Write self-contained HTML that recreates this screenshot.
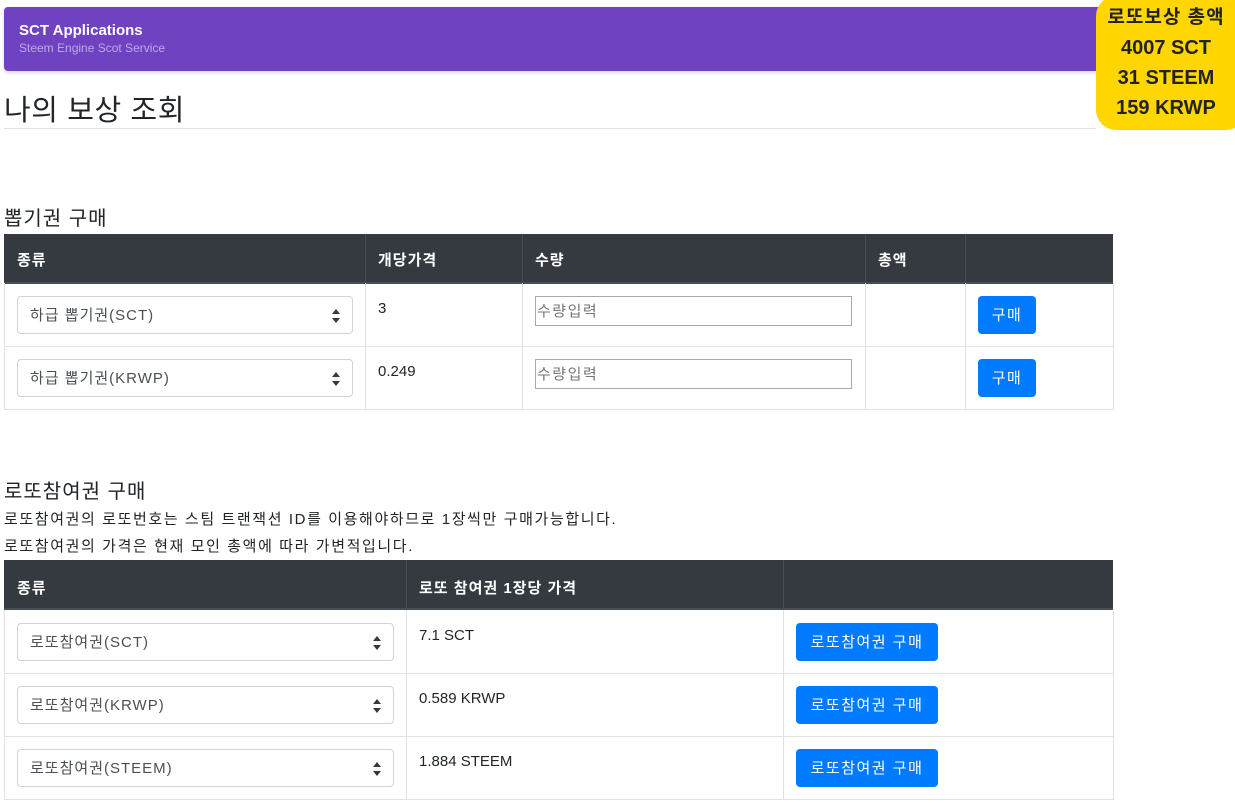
<!DOCTYPE html>
<html><head><meta charset="utf-8"><style>
*{box-sizing:border-box;margin:0;padding:0}
body{width:1235px;height:803px;overflow:hidden;background:#fff;font-family:"Liberation Sans","Noto Sans CJK KR",sans-serif;color:#212529;position:relative}
.a{position:absolute}
.nav{left:4px;top:7px;width:1240px;height:64px;background:#6f42c1;border-radius:4px;box-shadow:0 2px 4px rgba(0,0,0,.15)}
.yb{left:1096px;top:-4px;width:150px;height:134px;background:#ffd600;border-radius:20px;text-align:center;font-weight:bold;font-size:20px;color:#222;line-height:30px;padding-top:6px;padding-right:10px}
.th{background:#343a40;color:#fff;font-weight:bold;font-size:15px;height:50px;border-bottom:2px solid #454d55}
.cellb{border:1px solid #dee2e6}
.sel{border:1px solid #ced4da;border-radius:4px;height:38px;font-size:15px;padding:0 12px;line-height:38px;color:#495057;letter-spacing:1px}
.sel:after{content:"";position:absolute;right:12px;top:12px;border:4px solid transparent;border-bottom:5px solid #343a40;border-top:0}
.sel:before{content:"";position:absolute;right:12px;top:21px;border:4px solid transparent;border-top:5px solid #343a40;border-bottom:0}
.btn{background:#007bff;color:#fff;border-radius:4px;height:38px;font-size:15px;line-height:40px;text-align:center;letter-spacing:1.5px}
.inp{border:1px solid #a9a9a9;height:30px;font-size:15px;line-height:30px;color:#757575;padding-left:1px;letter-spacing:1.5px}
.t{font-size:15px}
.k{letter-spacing:1.6px}
.hd{color:#fff;font-weight:bold;font-size:15px;letter-spacing:1px}
</style></head><body>
<div class="a nav"></div>
<div class="a" style="left:19px;top:22px;color:#fff;font-weight:bold;font-size:15px">SCT Applications</div>
<div class="a" style="left:19px;top:41px;color:#c0a8e8;font-size:12px">Steem Engine Scot Service</div>
<div class="a yb"><span style="font-size:19px;letter-spacing:1px">로또보상 총액</span><br>4007 SCT<br>31 STEEM<br>159 KRWP</div>
<div class="a" style="left:4px;top:87px;font-size:29px;color:#212529;letter-spacing:0.6px">나의 보상 조회</div>
<div class="a" style="left:4px;top:128px;width:1092px;height:1px;background:#dee2e6"></div>

<div class="a" style="left:4px;top:202px;font-size:20px;letter-spacing:1px">뽑기권 구매</div>
<div class="a th" style="left:4px;top:234px;width:1109px"></div>
<div class="a hd" style="left:17px;top:249px">종류</div>
<div class="a hd" style="left:378px;top:249px">개당가격</div>
<div class="a hd" style="left:535px;top:249px">수량</div>
<div class="a hd" style="left:878px;top:249px">총액</div>
<div class="a" style="left:365px;top:234px;width:1px;height:49px;background:#454d55"></div>
<div class="a" style="left:522px;top:234px;width:1px;height:49px;background:#454d55"></div>
<div class="a" style="left:865px;top:234px;width:1px;height:49px;background:#454d55"></div>
<div class="a" style="left:965px;top:234px;width:1px;height:49px;background:#454d55"></div>
<div class="a cellb" style="left:4px;top:283px;width:1110px;height:127px;border-top:0"></div>
<div class="a" style="left:4px;top:346px;width:1110px;height:1px;background:#dee2e6"></div>
<div class="a" style="left:365px;top:283px;width:1px;height:127px;background:#dee2e6"></div>
<div class="a" style="left:522px;top:283px;width:1px;height:127px;background:#dee2e6"></div>
<div class="a" style="left:865px;top:283px;width:1px;height:127px;background:#dee2e6"></div>
<div class="a" style="left:965px;top:283px;width:1px;height:127px;background:#dee2e6"></div>
<div class="a sel" style="left:17px;top:296px;width:336px">하급 뽑기권(SCT)</div>
<div class="a sel" style="left:17px;top:359px;width:336px">하급 뽑기권(KRWP)</div>
<div class="a t" style="left:378px;top:300px">3</div>
<div class="a t" style="left:378px;top:363px">0.249</div>
<div class="a inp" style="left:535px;top:296px;width:317px">수량입력</div>
<div class="a inp" style="left:535px;top:359px;width:317px">수량입력</div>
<div class="a btn" style="left:978px;top:296px;width:58px">구매</div>
<div class="a btn" style="left:978px;top:359px;width:58px">구매</div>

<div class="a" style="left:4px;top:475px;font-size:20px;letter-spacing:1px">로또참여권 구매</div>
<div class="a t k" style="left:4px;top:508px">로또참여권의 로또번호는 스팀 트랜잭션 ID를 이용해야하므로 1장씩만 구매가능합니다.</div>
<div class="a t k" style="left:4px;top:535px">로또참여권의 가격은 현재 모인 총액에 따라 가변적입니다.</div>
<div class="a th" style="left:4px;top:560px;width:1109px"></div>
<div class="a hd" style="left:17px;top:577px">종류</div>
<div class="a hd" style="left:419px;top:577px">로또 참여권 1장당 가격</div>
<div class="a" style="left:406px;top:560px;width:1px;height:50px;background:#454d55"></div>
<div class="a" style="left:783px;top:560px;width:1px;height:50px;background:#454d55"></div>
<div class="a cellb" style="left:4px;top:610px;width:1110px;height:190px;border-top:0"></div>
<div class="a" style="left:4px;top:673px;width:1110px;height:1px;background:#dee2e6"></div>
<div class="a" style="left:4px;top:736px;width:1110px;height:1px;background:#dee2e6"></div>
<div class="a" style="left:406px;top:610px;width:1px;height:190px;background:#dee2e6"></div>
<div class="a" style="left:783px;top:610px;width:1px;height:190px;background:#dee2e6"></div>
<div class="a sel" style="left:17px;top:623px;width:377px">로또참여권(SCT)</div>
<div class="a sel" style="left:17px;top:686px;width:377px">로또참여권(KRWP)</div>
<div class="a sel" style="left:17px;top:749px;width:377px">로또참여권(STEEM)</div>
<div class="a t" style="left:419px;top:627px">7.1 SCT</div>
<div class="a t" style="left:419px;top:690px">0.589 KRWP</div>
<div class="a t" style="left:419px;top:753px">1.884 STEEM</div>
<div class="a btn" style="left:796px;top:623px;width:142px">로또참여권 구매</div>
<div class="a btn" style="left:796px;top:686px;width:142px">로또참여권 구매</div>
<div class="a btn" style="left:796px;top:749px;width:142px">로또참여권 구매</div>
</body></html>
